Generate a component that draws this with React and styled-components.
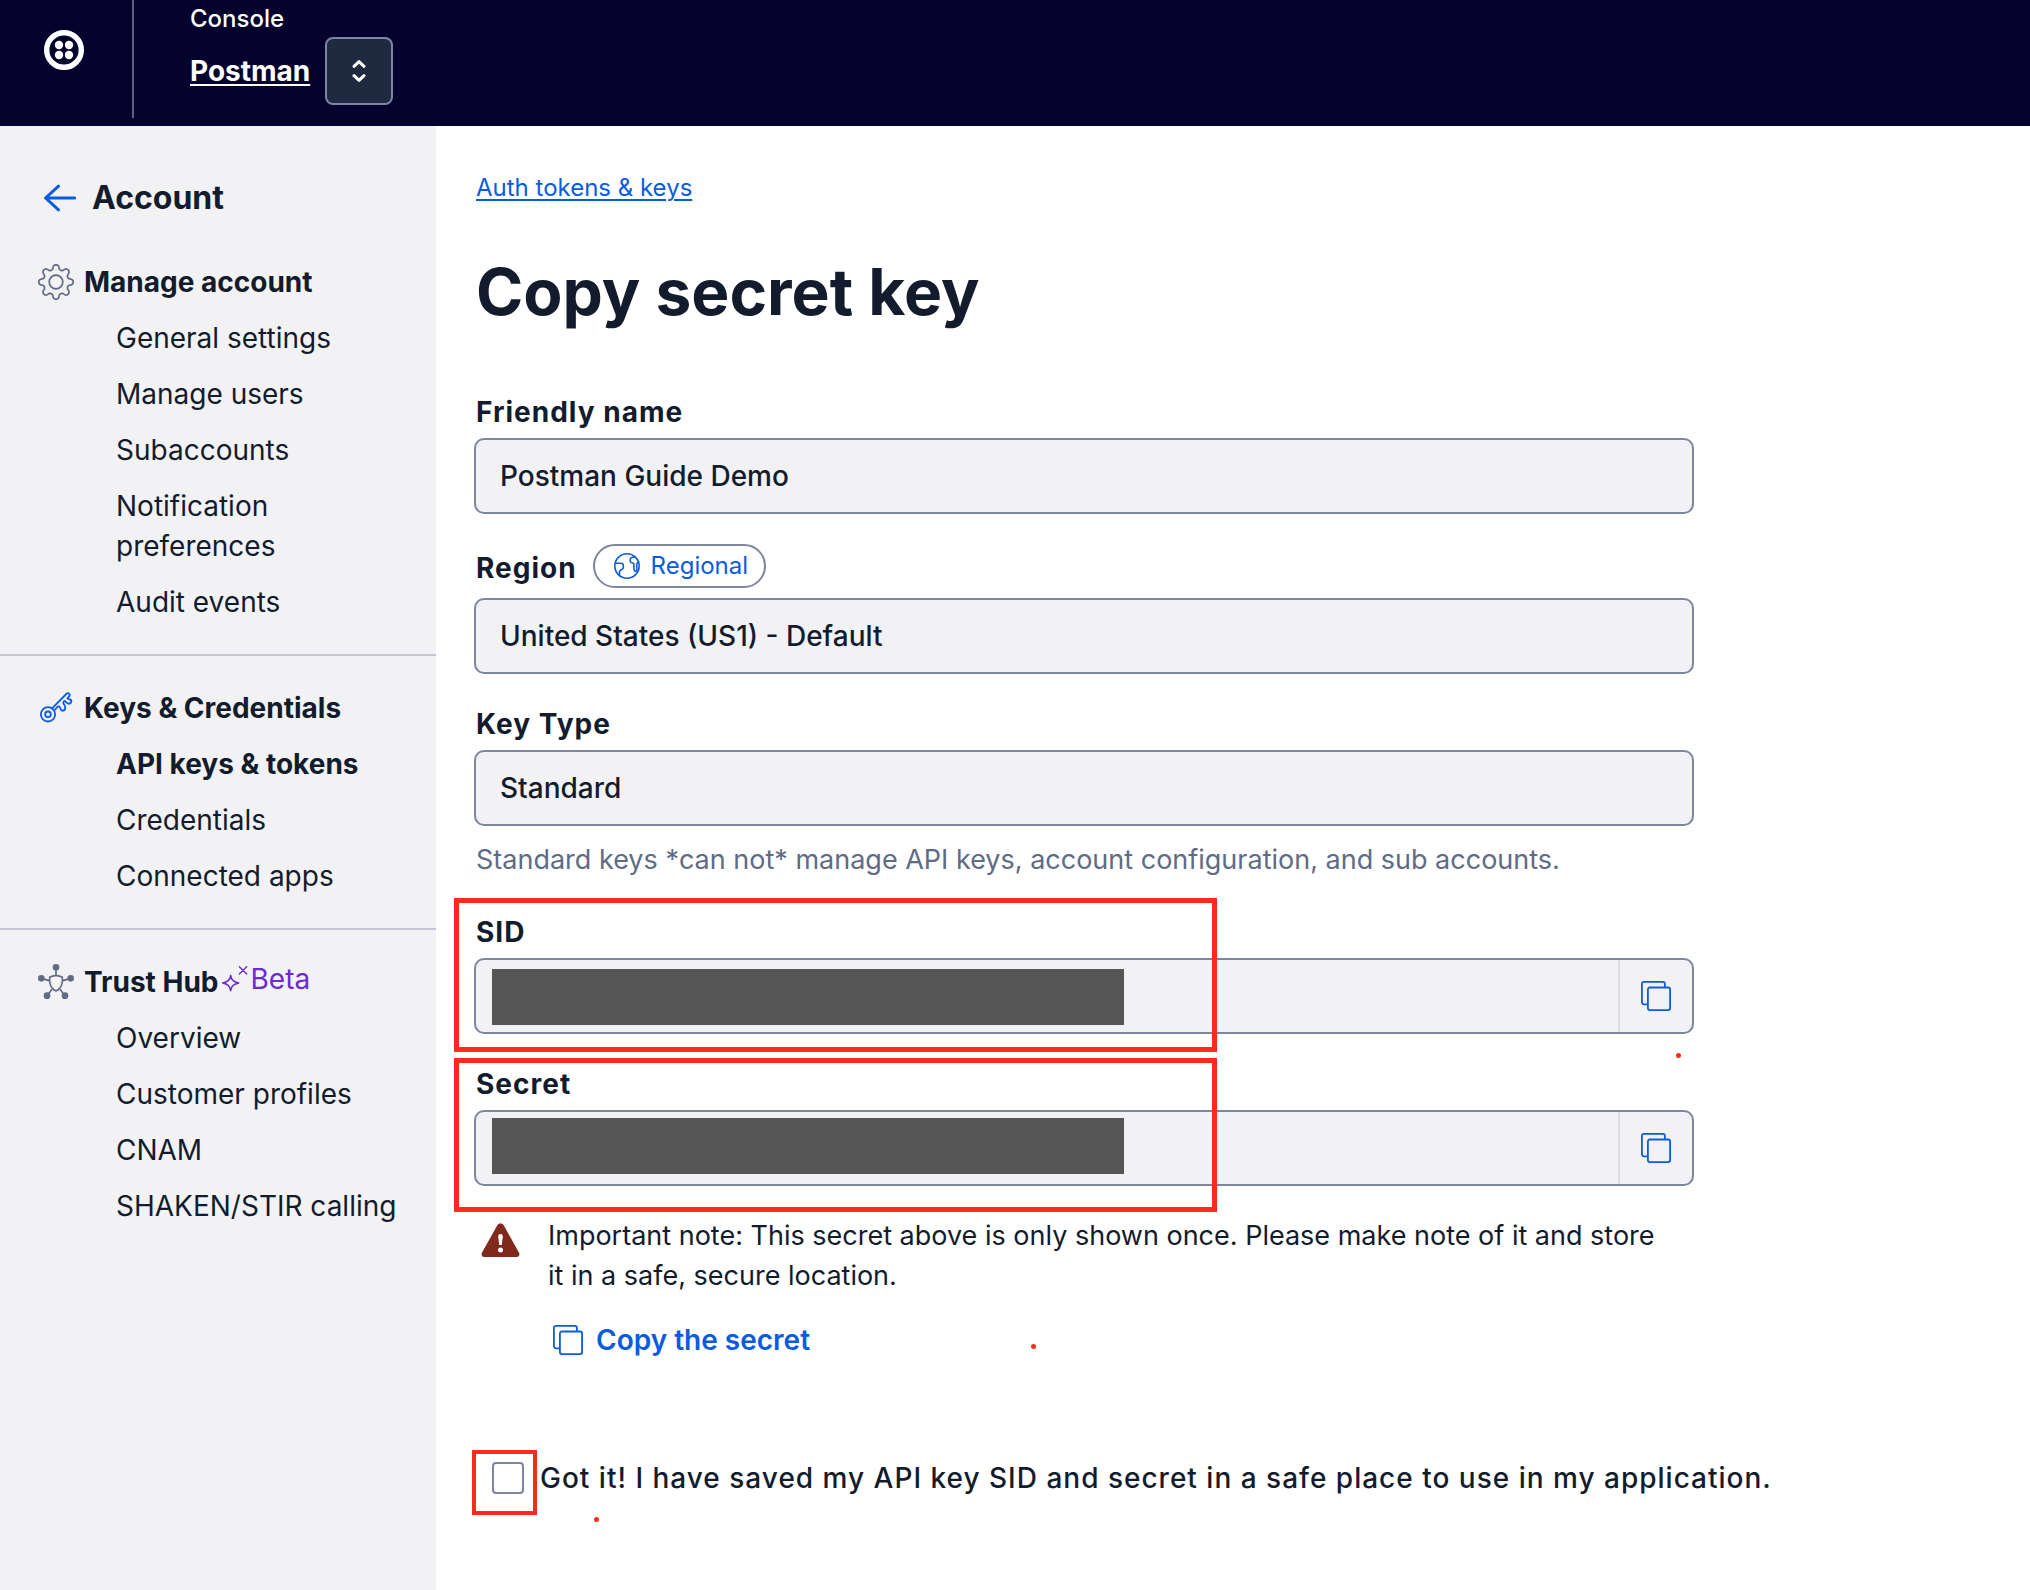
import React from "react";
import styled, { createGlobalStyle } from "styled-components";

const color = {
  navy: "#06022e",
  ink: "#121c2d",
  weak: "#606b85",
  blue: "#0b5bdf",
  line: "#7d85a0",
  divider: "#c4c6d6",
  panel: "#f2f2f4",
  purple: "#6b2bcf",
  mark: "#fd2b1b",
  redacted: "#555555",
  warning: "#7f2a1c",
};

const GlobalStyle = createGlobalStyle`
  *, *::before, *::after { box-sizing: border-box; }
  body {
    margin: 0;
    background: #fff;
    color: ${color.ink};
    font-family: Inter, "Liberation Sans", sans-serif;
    font-size: 28px;
    line-height: 40px;
  }
  h1, h2, p, ul { margin: 0; padding: 0; }
  button, input { font: inherit; color: inherit; margin: 0; }
  svg { display: block; flex: none; }
`;

const Page = styled.div`
  min-height: 100vh;
  display: flex;
  flex-direction: column;
`;

const Header = styled.header`
  display: flex;
  height: 126px;
  background: ${color.navy};
  color: #fff;
`;

const LogoLink = styled.a`
  width: 134px;
  height: 118px;
  padding: 30px 0 0 44px;
  border-right: 2px solid #5d6080;
`;

const Workspace = styled.div`
  padding: 3px 0 0 56px;
`;

const Product = styled.div`
  font-size: 24px;
  font-weight: 500;
  line-height: 32px;
`;

const AccountRow = styled.div`
  display: flex;
  align-items: center;
  gap: 15px;
  margin-top: 2px;
`;

const AccountLink = styled.a`
  color: #fff;
  font-weight: 700;
  text-underline-offset: 3px;
  text-decoration-thickness: 2px;
`;

const SwitchButton = styled.button`
  display: flex;
  align-items: center;
  justify-content: center;
  width: 68px;
  height: 68px;
  padding: 0;
  border: 2px solid ${color.line};
  border-radius: 8px;
  background: #1f2a41;
`;

const Body = styled.div`
  flex: 1;
  display: flex;
`;

const Sidebar = styled.nav`
  flex: none;
  width: 436px;
  padding-top: 52px;
  background: ${color.panel};
`;

const BackLink = styled.a`
  display: flex;
  align-items: center;
  gap: 16px;
  padding-left: 44px;
  margin-bottom: 44px;
  color: inherit;
  font-size: 32px;
  font-weight: 700;
  text-decoration: none;
`;

const NavGroup = styled.section`
  padding: 0 40px 32px 38px;

  & + & {
    padding-top: 32px;
    border-top: 2px solid ${color.divider};
  }
`;

const GroupTitle = styled.h2`
  display: flex;
  align-items: center;
  font-size: 28px;
  font-weight: 700;
  line-height: 40px;

  > svg:first-child { margin-right: 10px; }
`;

const Beta = styled.span`
  display: flex;
  align-items: center;
  gap: 2px;
  margin-left: 2px;
  padding-bottom: 6px;
  color: ${color.purple};
  font-size: 28px;
  font-weight: 400;
  line-height: 34px;
`;

const NavList = styled.ul`
  display: flex;
  flex-direction: column;
  gap: 16px;
  margin-top: 16px;
  padding-left: 78px;
  list-style: none;
`;

const NavLink = styled.a`
  display: block;
  color: inherit;
  font-weight: ${(p) => (p.$active ? 700 : 400)};
  text-decoration: none;
  white-space: ${(p) => (p.$wrap ? "normal" : "nowrap")};
`;

const Main = styled.main`
  flex: 1;
  min-width: 0;
  padding: 42px 38px;
`;

const Intro = styled.div`
  padding-left: 2px;
`;

const Crumb = styled.a`
  display: block;
  width: fit-content;
  color: ${color.blue};
  font-size: 24px;
  text-underline-offset: 3px;
  text-decoration-thickness: 2px;
`;

const Title = styled.h1`
  margin: 42px 0 58px;
  font-size: 64px;
  font-weight: 700;
  line-height: 84px;
`;

const Form = styled.form`
  display: flex;
  flex-direction: column;
  gap: 30px;
  max-width: 1220px;
`;

const Field = styled.div`
  position: relative;
`;

const LabelRow = styled.div`
  display: flex;
  align-items: flex-end;
  gap: 16px;
  margin-bottom: ${(p) => (p.$roomy ? 10 : 6)}px;
  padding-left: 2px;
`;

const Label = styled.label`
  font-weight: 700;
  letter-spacing: 1px;
`;

const Badge = styled.a`
  display: flex;
  align-items: center;
  gap: 10px;
  height: 44px;
  padding: 0 16px 0 18px;
  border: 2px solid ${color.line};
  border-radius: 22px;
  color: ${color.blue};
  font-size: 24px;
  text-decoration: none;
`;

const Control = styled.div`
  position: relative;
  display: flex;
  height: 76px;
  border: 2px solid ${color.line};
  border-radius: 10px;
  background: ${color.panel};
`;

const TextInput = styled.input`
  flex: 1;
  min-width: 0;
  padding: 0 24px;
  border: 0;
  outline: 0;
  background: transparent;
  font-weight: 500;
`;

const CopyButton = styled.button`
  display: flex;
  align-items: center;
  justify-content: center;
  width: 74px;
  padding: 0;
  border: 0;
  border-left: 2px solid #dadee6;
  background: transparent;
  color: ${color.blue};
`;

const Redaction = styled.span`
  position: absolute;
  top: ${(p) => p.$top}px;
  left: 16px;
  width: 632px;
  height: 56px;
  background: ${color.redacted};
`;

const FieldMark = styled.span`
  position: absolute;
  top: ${(p) => p.$top}px;
  left: -20px;
  width: 763px;
  height: 154px;
  border: 5px solid ${color.mark};
  pointer-events: none;
`;

const Dot = styled.span`
  position: absolute;
  left: ${(p) => p.$x}px;
  top: ${(p) => p.$y}px;
  width: 5px;
  height: 5px;
  border-radius: 50%;
  background: ${color.mark};
`;

const Help = styled.p`
  padding: 14px 0 2px 2px;
  color: ${color.weak};
  font-size: 27px;
`;

const Notice = styled.div`
  display: flex;
  gap: 28px;
  padding-left: 7px;

  > svg { margin-top: 7px; }
`;

const NoticeBody = styled.div`
  position: relative;
`;

const NoticeText = styled.p`
  padding-right: 20px;
  font-size: 27px;
`;

const CopyLink = styled.button`
  display: flex;
  align-items: center;
  gap: 13px;
  margin-top: 24px;
  padding: 0 0 0 5px;
  border: 0;
  background: transparent;
  color: ${color.blue};
  font-weight: 600;
`;

const Confirm = styled.div`
  position: relative;
  display: flex;
  align-items: center;
  gap: 16px;
  margin-top: 68px;
  padding-left: 18px;
`;

const ConfirmLabel = styled.label`
  font-weight: 500;
  letter-spacing: 1px;
  white-space: nowrap;
`;

const Checkbox = styled.input`
  appearance: none;
  flex: none;
  width: 32px;
  height: 32px;
  border: 2px solid ${color.line};
  border-radius: 4px;
  background: #fff;

  &:checked { background: ${color.blue}; }
`;

const CheckMark = styled.span`
  position: absolute;
  top: -8px;
  left: -2px;
  width: 65px;
  height: 65px;
  border: 4px solid ${color.mark};
  pointer-events: none;
`;

const LogoIcon = () => (
  <svg width="40" height="40" viewBox="0 0 40 40" fill="#fff" aria-hidden="true">
    <circle cx="20" cy="20" r="17.3" fill="none" stroke="#fff" strokeWidth="5.4" />
    <circle cx="15" cy="15" r="4.2" />
    <circle cx="25" cy="15" r="4.2" />
    <circle cx="15" cy="25" r="4.2" />
    <circle cx="25" cy="25" r="4.2" />
  </svg>
);

const UpDownIcon = () => (
  <svg width="14" height="24" viewBox="0 0 14 24" fill="none" stroke="#fff" strokeWidth="3" strokeLinecap="round" strokeLinejoin="round" aria-hidden="true">
    <path d="M2 7.3 7 2.6l5 4.7M2 16.7l5 4.7 5-4.7" />
  </svg>
);

const BackIcon = () => (
  <svg width="32" height="28" viewBox="0 0 32 28" fill="none" stroke={color.blue} strokeWidth="3" strokeLinecap="round" strokeLinejoin="round" aria-hidden="true">
    <path d="M14.5 2.2 1.6 14l12.9 11.8M1.6 14h29" />
  </svg>
);

const gearPath = (() => {
  const points = [];
  for (let i = 0; i < 160; i += 1) {
    const t = (i / 160) * Math.PI * 2;
    const r = 14.9 + 2.3 * Math.cos(8 * t);
    const a = t + 0.03 * Math.sin(16 * t);
    points.push(`${(18 + r * Math.cos(a)).toFixed(2)} ${(18 + r * Math.sin(a)).toFixed(2)}`);
  }
  return `M${points.join("L")}Z`;
})();

const GearIcon = () => (
  <svg width="36" height="36" viewBox="0 0 36 36" fill="none" stroke={color.weak} strokeWidth="1.7" strokeLinejoin="round" aria-hidden="true">
    <path d={gearPath} />
    <circle cx="18" cy="18" r="6.8" />
  </svg>
);

const KeyIcon = () => (
  <svg width="36" height="36" viewBox="114 89 108 108" fill="none" stroke={color.blue} strokeWidth="5.4" strokeLinecap="round" strokeLinejoin="round" aria-hidden="true">
    <path d="M156 144 199 101Q204 96 208 101Q211 105 206 110L202 114Q205 118 210 117Q216 120 213 127Q208 132 203 129Q197 125 195 122Q189 123 190 129Q196 135 196 143Q194 152 186 151Q181 149 181 143Q178 136 173 139L165 148" />
    <circle cx="144" cy="162" r="21.5" />
    <circle cx="144" cy="162" r="8.5" />
  </svg>
);

const HubIcon = () => (
  <svg width="36" height="36" viewBox="114 71 108 108" fill="none" stroke={color.weak} strokeWidth="5" strokeLinejoin="round" aria-hidden="true">
    <path d="M168 106Q159 105 149 111Q146 142 168 152Q190 142 187 111Q177 105 168 106Z" />
    <path d="M168 81v25M124 114l24 7M212 114l-24 7M141 166l15-19M195 166l-15-19" />
    <g fill={color.weak} stroke="none">
      <circle cx="168" cy="81" r="10" />
      <circle cx="124" cy="114" r="10" />
      <circle cx="212" cy="114" r="10" />
      <circle cx="141" cy="166" r="10" />
      <circle cx="195" cy="166" r="10" />
    </g>
  </svg>
);

const SparkleIcon = () => (
  <svg width="28" height="28" viewBox="664 72 84 84" fill="none" stroke={color.purple} strokeWidth="4.5" strokeLinecap="round" strokeLinejoin="round" aria-hidden="true">
    <path d="M693 103Q695 122 717 126Q695 130 693 149Q691 130 669 126Q691 122 693 103Z" />
    <path d="M719 77l22 22M741 77l-22 22" strokeWidth="4" />
  </svg>
);

const GlobeIcon = () => (
  <svg width="28" height="28" viewBox="0 0 28 28" fill="none" stroke="currentColor" strokeWidth="1.6" strokeLinecap="round" strokeLinejoin="round" aria-hidden="true">
    <circle cx="14" cy="14" r="12.2" />
    <path d="M2.6 11.2h4.9q2.8 0 2.8 2.2v2.2q-.2 1.6-2.1 2.2-1.6.6-1.7 2.2v3.3" />
    <path d="M22 5q-4.6-.2-4.8 2.6v1.4q.3 2 2.8 2 1.2.4.9 2v3.2q.2 3.600 2.200 3.200 1.200-.5.800-3-.3-2.600-.1-4.400.6-1.400 1.800-2.200" />
  </svg>
);

const CopyIcon = () => (
  <svg width="30" height="30" viewBox="0 0 30 30" fill="none" stroke="currentColor" strokeWidth="1.8" strokeLinejoin="round" aria-hidden="true">
    <rect x="6.9" y="6.5" width="22.2" height="22.6" rx="2" />
    <path d="M6.5 23.3H2.9a2 2 0 0 1-2-2V2.9a2 2 0 0 1 2-2h19a2 2 0 0 1 2 2v3.2" />
  </svg>
);

const WarningIcon = () => (
  <svg width="39" height="34" viewBox="0 0 39 34" aria-hidden="true">
    <path d="M16.6 1.7Q19.5-1.4 22.4 1.7L38.2 30Q39.2 33.8 36 34H3Q-.2 33.8.8 30Z" fill={color.warning} />
    <path d="M17.2 13.2a2.3 2.3 0 0 1 4.6 0L20.8 22h-2.6Z" fill="#fff" />
    <circle cx="19.5" cy="27" r="2.5" fill="#fff" />
  </svg>
);

const groups = [
  {
    title: "Manage account",
    Icon: GearIcon,
    items: ["General settings", "Manage users", "Subaccounts", "Notification preferences", "Audit events"],
  },
  {
    title: "Keys & Credentials",
    Icon: KeyIcon,
    items: ["API keys & tokens", "Credentials", "Connected apps"],
  },
  {
    title: "Trust Hub",
    Icon: HubIcon,
    beta: true,
    items: ["Overview", "Customer profiles", "CNAM", "SHAKEN/STIR calling"],
  },
];

const ACTIVE = "API keys & tokens";
const WRAPPED = "Notification preferences";

function SecretField({ id, label, markTop, redactionTop, children }) {
  return (
    <Field>
      <LabelRow>
        <Label htmlFor={id}>{label}</Label>
      </LabelRow>
      <Control>
        <TextInput id={id} readOnly defaultValue="" />
        <Redaction $top={redactionTop} />
        <CopyButton type="button" aria-label={`Copy ${label}`}>
          <CopyIcon />
        </CopyButton>
      </Control>
      <FieldMark $top={markTop} />
      {children}
    </Field>
  );
}

export default function App() {
  return (
    <Page>
      <GlobalStyle />
      <Header>
        <LogoLink href="#home" aria-label="Home">
          <LogoIcon />
        </LogoLink>
        <Workspace>
          <Product>Console</Product>
          <AccountRow>
            <AccountLink href="#postman">Postman</AccountLink>
            <SwitchButton type="button" aria-label="Switch account">
              <UpDownIcon />
            </SwitchButton>
          </AccountRow>
        </Workspace>
      </Header>
      <Body>
        <Sidebar>
          <BackLink href="#account">
            <BackIcon />
            Account
          </BackLink>
          {groups.map(({ title, Icon, beta, items }) => (
            <NavGroup key={title}>
              <GroupTitle>
                <Icon />
                {title}
                {beta && (
                  <Beta>
                    <SparkleIcon />
                    Beta
                  </Beta>
                )}
              </GroupTitle>
              <NavList>
                {items.map((item) => (
                  <li key={item}>
                    <NavLink href="#nav" $active={item === ACTIVE} $wrap={item === WRAPPED}>
                      {item}
                    </NavLink>
                  </li>
                ))}
              </NavList>
            </NavGroup>
          ))}
        </Sidebar>
        <Main>
          <Intro>
            <Crumb href="#keys">Auth tokens &amp; keys</Crumb>
            <Title>Copy secret key</Title>
          </Intro>
          <Form>
            <Field>
              <LabelRow>
                <Label htmlFor="name">Friendly name</Label>
              </LabelRow>
              <Control>
                <TextInput id="name" readOnly defaultValue="Postman Guide Demo" />
              </Control>
            </Field>
            <Field>
              <LabelRow $roomy>
                <Label htmlFor="region">Region</Label>
                <Badge href="#regional">
                  <GlobeIcon />
                  Regional
                </Badge>
              </LabelRow>
              <Control>
                <TextInput id="region" readOnly defaultValue="United States (US1) - Default" />
              </Control>
            </Field>
            <Field>
              <LabelRow>
                <Label htmlFor="type">Key Type</Label>
              </LabelRow>
              <Control>
                <TextInput id="type" readOnly defaultValue="Standard" />
              </Control>
              <Help>Standard keys *can not* manage API keys, account configuration, and sub accounts.</Help>
            </Field>
            <SecretField id="sid" label="SID" markTop={-14} redactionTop={9}>
              <Dot $x={1202} $y={141} />
            </SecretField>
            <SecretField id="secret" label="Secret" markTop={-6} redactionTop={6} />
            <Notice>
              <WarningIcon />
              <NoticeBody>
                <NoticeText>
                  Important note: This secret above is only shown once. Please make note of it and store it in a
                  safe, secure location.
                </NoticeText>
                <CopyLink type="button">
                  <CopyIcon />
                  Copy the secret
                </CopyLink>
                <Dot $x={483} $y={128} />
              </NoticeBody>
            </Notice>
            <Confirm>
              <Checkbox type="checkbox" id="saved" />
              <ConfirmLabel htmlFor="saved">
                Got it! I have saved my API key SID and secret in a safe place to use in my application.
              </ConfirmLabel>
              <CheckMark />
              <Dot $x={120} $y={59} />
            </Confirm>
          </Form>
        </Main>
      </Body>
    </Page>
  );
}
